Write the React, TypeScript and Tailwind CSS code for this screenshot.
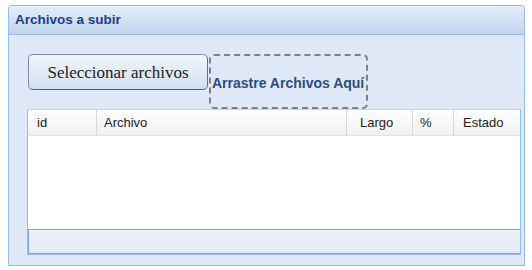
import React from "react";

interface Column {
  label: string;
  width: string;
  pad: string;
}

const columns: Column[] = [
  { label: "id", width: "w-[69px]", pad: "pl-[9px]" },
  { label: "Archivo", width: "w-[250px]", pad: "pl-[7px]" },
  { label: "Largo", width: "w-[66px]", pad: "pl-[13px]" },
  { label: "%", width: "w-[41px]", pad: "pl-[7px]" },
  { label: "Estado", width: "flex-1", pad: "pl-[9px]" },
];

export default function App() {
  return (
    <div className="w-[532px] h-[270px] bg-white pt-[5px] pl-[8px] font-['Liberation_Sans',Arial,sans-serif]">
      {/* Panel */}
      <div className="w-[517px] h-[261px] border border-[#99bbe8] rounded-t-[3px] bg-[#dfe8f6] flex flex-col overflow-hidden">
        <div className="h-[29px] shrink-0 flex items-center pl-[6px] border-b border-[#99bbe8] bg-gradient-to-b from-[#e4edf9] via-[#d3e1f4] to-[#bfd3ee]">
          <span className="text-[13.5px] font-bold text-[#15428b] leading-none">Archivos a subir</span>
        </div>

        <div className="flex-1 flex flex-col pl-[18px] pt-[19px]">
          {/* Buttons row */}
          <div className="flex items-start">
            <button className="ml-[1px] w-[180px] h-[36px] rounded-[5px] border border-[#7d8eab] border-b-[#4f5f7d] border-r-[#5f6f8c] bg-gradient-to-b from-[#f1f5fc] to-[#d3e0f3] font-['Liberation_Serif','Times_New_Roman',serif] text-[17px] text-[#222] leading-none">
              Seleccionar archivos
            </button>
            <div className="w-[159px] h-[55px] ml-[1px] border-2 border-dashed border-[#808080] rounded-[5px] flex items-center pl-[1px]">
              <span className="text-[14px] font-bold text-[#2d4e7e] whitespace-nowrap leading-none pt-[2px]">Arrastre Archivos Aquí</span>
            </div>
          </div>

          {/* Grid */}
          <div className="w-[494px] h-[146px] border border-[#99bbe8] border-t-[#c7d5ea] bg-white flex flex-col">
            <div className="h-[26px] shrink-0 flex bg-gradient-to-b from-white to-[#f0f0f0] border-b border-[#e2e2e2]">
              {columns.map((col, i) => (
                <div
                  key={col.label}
                  className={`${col.width} ${col.pad} flex items-center text-[13px] text-[#222] ${i < columns.length - 1 ? "border-r border-[#d6d6d6]" : ""}`}
                >
                  {col.label}
                </div>
              ))}
            </div>
            <div className="flex-1 bg-white" />
            <div className="h-[25px] shrink-0 border-t border-b border-l border-[#7ea6dd] bg-gradient-to-b from-[#eef2f9] to-[#e3eaf5]" />
          </div>
        </div>
      </div>
    </div>
  );
}
